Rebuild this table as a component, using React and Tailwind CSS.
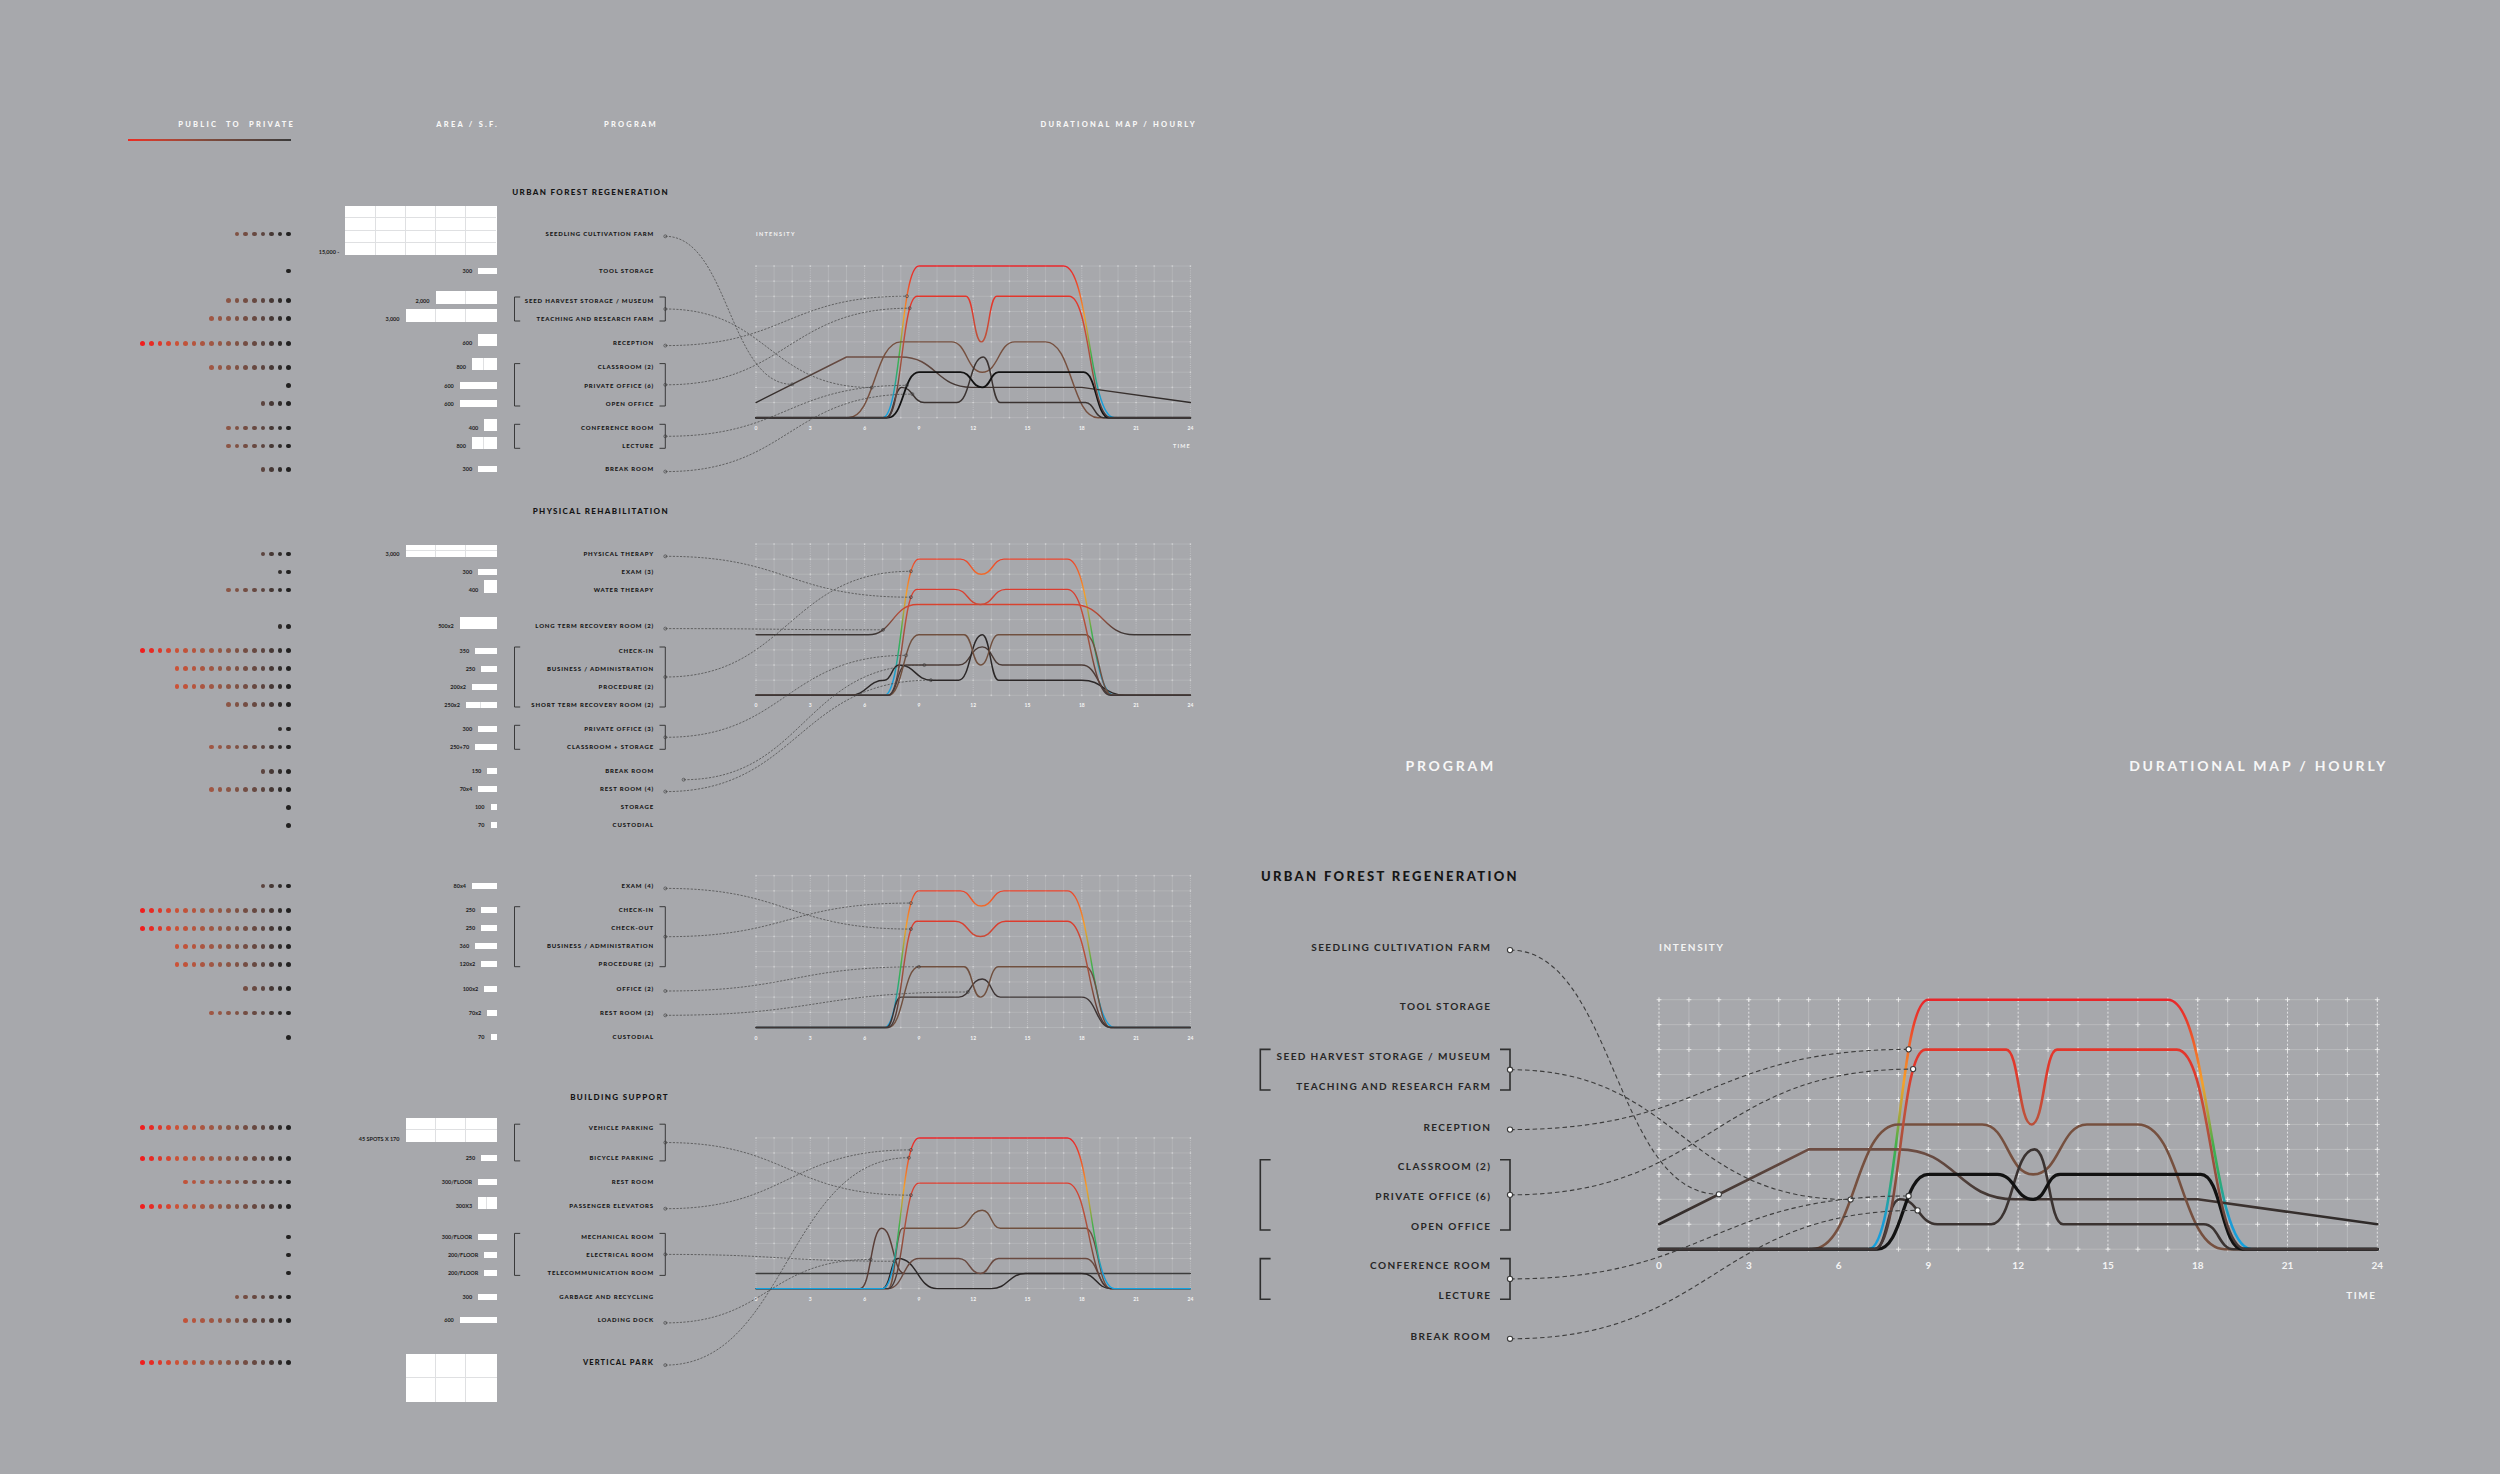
const FONT = "font-['Lato','Noto_Sans','DejaVu_Sans',sans-serif]";

// colour of a dot by its index counted from the right end
const DOT_STOPS = [
  [0, [34, 33, 33]],
  [1, [48, 44, 43]],
  [3, [92, 68, 63]],
  [7, [140, 86, 70]],
  [9, [160, 87, 68]],
  [13, [204, 82, 55]],
  [17, [240, 30, 30]],
];

function dotColor(i) {
  for (let k = 1; k < DOT_STOPS.length; k++) {
    const [i0, c0] = DOT_STOPS[k - 1];
    const [i1, c1] = DOT_STOPS[k];
    if (i <= i1) {
      const f = (i - i0) / (i1 - i0);
      const c = c0.map((v, j) => Math.round(v + (c1[j] - v) * f));
      return `rgb(${c[0]},${c[1]},${c[2]})`;
    }
  }
  return "rgb(240,30,30)";
}

// smooth step curves: each segment leaves and enters with a flat tangent
function curvePath(pts, X, Y) {
  let d = `M${X(pts[0][0])},${Y(pts[0][1])}`;
  for (let i = 1; i < pts.length; i++) {
    const [h0, v0] = pts[i - 1];
    const [h1, v1, m] = pts[i];
    const x0 = X(h0), y0 = Y(v0), x1 = X(h1), y1 = Y(v1);
    if (m === "L" || v0 === v1) d += ` L${x1},${y1}`;
    else {
      const mx = (x0 + x1) / 2;
      d += ` C${mx},${y0} ${mx},${y1} ${x1},${y1}`;
    }
  }
  return d;
}

function valueAt(pts, h) {
  for (let i = 1; i < pts.length; i++) {
    const [h0, v0] = pts[i - 1];
    const [h1, v1, m] = pts[i];
    if (h <= h1) {
      if (m === "L" || v0 === v1) return v0 + ((v1 - v0) * (h - h0)) / (h1 - h0);
      const f = (h - h0) / (h1 - h0);
      let lo = 0, hi = 1;
      for (let k = 0; k < 40; k++) {
        const t = (lo + hi) / 2;
        const x = 1.5 * t * (1 - t) + t * t * t;
        if (x < f) lo = t;
        else hi = t;
      }
      const t = (lo + hi) / 2;
      return v0 + (v1 - v0) * (3 * t * t - 2 * t * t * t);
    }
  }
  return pts[pts.length - 1][1];
}

function chartMap(g) {
  const rh = (g.zero - g.top) / 10;
  return { X: (h) => g.x0 + h * g.cw, Y: (v) => g.zero - v * rh, rh };
}

const CH1 = {
  order: ["A", "D", "C", "F", "E", "B"],
  A: { pts: [[0, 0], [7, 0], [9, 10], [17, 10], [19.8, 0], [24, 0]], stroke: "A" },
  B: { pts: [[0, 0], [7.2, 0], [8.9, 8], [11.6, 8], [12.45, 5], [13.3, 8], [17.3, 8], [19.6, 0], [24, 0]], stroke: "B" },
  C: { pts: [[0, 0], [5.1, 0], [8, 5], [10.8, 5], [12.5, 3], [14.3, 5], [16, 5], [18.9, 0], [24, 0]], stroke: "#76503f" },
  D: { pts: [[0, 1], [5, 4, "L"], [8, 4], [11.9, 2], [18, 2], [24, 1, "L"]], stroke: "D" },
  E: { pts: [[0, 0], [7.3, 0], [9, 3], [11.3, 3], [12.5, 2], [13.4, 3], [18.1, 3], [19.5, 0], [24, 0]], stroke: "#121212", w: 1.25 },
  F: { pts: [[0, 0], [7.2, 0], [8.05, 2], [9.3, 1], [11.1, 1], [12.55, 4], [13.5, 1], [18.2, 1], [19.2, 0], [24, 0]], stroke: "#3b3331" },
};

const A9 = [[0, 0], [7.1, 0], [9, 9], [11.3, 9], [12.45, 8], [13.7, 9], [17.2, 9], [19.8, 0], [24, 0]];
const B7 = [[0, 0], [7.3, 0], [8.9, 7], [11, 7], [12.4, 6], [13.8, 7], [17.2, 7], [19.6, 0], [24, 0]];

const CH2 = {
  order: ["A", "C", "F", "E", "D", "B"],
  A: { pts: A9, stroke: "A" },
  B: { pts: B7, stroke: "B" },
  C: { pts: [[0, 4], [6.2, 4], [8.9, 6], [17.5, 6], [20.9, 4], [24, 4]], stroke: "C" },
  D: { pts: [[0, 0], [7.3, 0], [9, 4], [11.5, 4], [12.4, 2], [13.4, 4], [18.2, 4], [19.7, 0], [24, 0]], stroke: "#70503f" },
  E: { pts: [[0, 0], [5.2, 0], [7.1, 1], [7.9, 2], [9.7, 1], [11.2, 1], [12.5, 4], [13.4, 1], [18, 1], [20.4, 0], [24, 0]], stroke: "#2b2727" },
  F: { pts: [[0, 0], [7.3, 0], [8.3, 2], [11.2, 2], [12.5, 3.2], [13.6, 2], [18, 2], [19.8, 0], [24, 0]], stroke: "#4b3b36" },
};

const CH3 = {
  order: ["A", "D", "C", "B"],
  A: { pts: A9, stroke: "A" },
  B: { pts: B7, stroke: "B" },
  C: { pts: [[0, 0], [7.3, 0], [9, 4], [11.5, 4], [12.4, 2], [13.4, 4], [18.2, 4], [19.6, 0], [24, 0]], stroke: "#70503f" },
  D: { pts: [[0, 0], [7.2, 0], [8, 2], [11.2, 2], [12.5, 3.2], [13.5, 2], [18, 2], [19.6, 0], [24, 0]], stroke: "#3d3434" },
};

const CH4 = {
  order: ["E", "G", "F", "D", "C", "B", "A"],
  A: { pts: [[0, 0], [7, 0], [9, 10], [17.2, 10], [19.8, 0], [24, 0]], stroke: "A" },
  B: { pts: [[0, 0], [7.3, 0], [9, 7], [17.2, 7], [19.6, 0], [24, 0]], stroke: "B" },
  C: { pts: [[0, 0], [7.3, 0], [8.1, 4], [11.1, 4], [12.5, 5.2], [13.5, 4], [18.2, 4], [19.6, 0], [24, 0]], stroke: "#70503f" },
  D: { pts: [[0, 0], [7.3, 0], [9, 2], [11.2, 2], [12.4, 1], [13.4, 2], [18.2, 2], [19.6, 0], [24, 0]], stroke: "#6a4a40" },
  E: { pts: [[0, 1], [24, 1]], stroke: "#3c3c3c" },
  F: { pts: [[0, 0], [5.75, 0], [6.95, 4], [8.2, 1]], stroke: "#5a3e37" },
  G: { pts: [[0, 0], [7, 0], [7.85, 2], [10, 0], [13, 0], [14.9, 1], [18, 1], [19.6, 0], [24, 0]], stroke: "#2a2626" },
};

const SECTIONS = [
  {
    id: "s1",
    top: 209,
    chart: { x0: 756, cw: 18.1, top: 266, zero: 417.7, labels: true },
    curves: CH1,
    brackets: [[2, 3], [5, 7], [8, 9]],
    links: [
      { row: 0, c: "D", h: 2.0 },
      { br: 0, c: "C", h: 6.4 },
      { row: 4, c: "A", h: 8.34 },
      { br: 1, c: "B", h: 8.49 },
      { br: 2, c: "E", h: 8.34 },
      { row: 10, c: "F", h: 8.64 },
    ],
    rows: [
      { dots: 7, num: "15,000 -", bw: 151.2, bh: 48.3, cols: 5, rows: 4, label: "SEEDLING CULTIVATION FARM", rowH: 50, align: "end" },
      { dots: 1, num: "300", bw: 18.4, bh: 6.3, label: "TOOL STORAGE", gap: 3 },
      { dots: 8, num: "2,000", bw: 61, bh: 12.3, cols: 2, label: "SEED HARVEST STORAGE / MUSEUM", gap: 11.7 },
      { dots: 10, num: "3,000", bw: 91, bh: 12.3, cols: 3, label: "TEACHING AND RESEARCH FARM" },
      { dots: 18, num: "600", bw: 18.4, bh: 12.3, label: "RECEPTION", gap: 6.6 },
      { dots: 10, num: "800", bw: 24.5, bh: 12.3, cols: 2, label: "CLASSROOM (2)", gap: 6 },
      { dots: 1, num: "600", bw: 36.7, bh: 6.3, label: "PRIVATE OFFICE (6)", gap: 0.4 },
      { dots: 4, num: "600", bw: 36.7, bh: 6.3, label: "OPEN OFFICE" },
      { dots: 8, num: "400", bw: 12.2, bh: 12.3, label: "CONFERENCE ROOM", gap: 6.3 },
      { dots: 8, num: "800", bw: 24.5, bh: 12.3, cols: 2, label: "LECTURE" },
      { dots: 4, num: "300", bw: 18.4, bh: 6.3, label: "BREAK ROOM", gap: 5.3 },
    ],
  },
  {
    id: "s2",
    top: 545,
    chart: { x0: 756, cw: 18.1, top: 544, zero: 695.3 },
    curves: CH2,
    brackets: [[4, 7], [8, 9]],
    links: [
      { row: 0, c: "B", h: 8.56 },
      { row: 3, c: "C", h: 7.02 },
      { br: 0, c: "A", h: 8.56 },
      { br: 1, c: "D", h: 8.29 },
      { row: 10, c: "F", h: 9.3, sx: 683.6, dy: 8.4 },
      { row: 11, c: "E", h: 9.66 },
    ],
    rows: [
      { dots: 4, num: "3,000", bw: 91, bh: 12.3, cols: 3, rows: 2, label: "PHYSICAL THERAPY" },
      { dots: 2, num: "300", bw: 18.4, bh: 6, label: "EXAM (3)" },
      { dots: 8, num: "400", bw: 12.2, bh: 12.7, label: "WATER THERAPY" },
      { dots: 2, num: "500x2", bw: 36.7, bh: 12.3, label: "LONG TERM RECOVERY ROOM (2)", gap: 18.3 },
      { dots: 18, num: "350", bw: 21.4, bh: 6, label: "CHECK-IN", gap: 6.4 },
      { dots: 14, num: "250", bw: 15.3, bh: 6, label: "BUSINESS / ADMINISTRATION" },
      { dots: 14, num: "200x2", bw: 24.5, bh: 6, label: "PROCEDURE (2)" },
      { dots: 8, num: "250x2", bw: 30.6, bh: 6, cols: 2, label: "SHORT TERM RECOVERY ROOM (2)" },
      { dots: 2, num: "300", bw: 18.4, bh: 6, label: "PRIVATE OFFICE (3)", gap: 6.3 },
      { dots: 10, num: "250+70", bw: 21.4, bh: 6, label: "CLASSROOM + STORAGE" },
      { dots: 4, num: "150", bw: 9.2, bh: 6, label: "BREAK ROOM", gap: 6.3 },
      { dots: 10, num: "70x4", bw: 18.4, bh: 6, label: "REST ROOM (4)" },
      { dots: 1, num: "100", bw: 6, bh: 6.3, label: "STORAGE" },
      { dots: 1, num: "70", bw: 6, bh: 6.3, label: "CUSTODIAL" },
    ],
  },
  {
    id: "s3",
    top: 877.1,
    chart: { x0: 756, cw: 18.1, top: 875.7, zero: 1027.5 },
    curves: CH3,
    brackets: [[1, 4]],
    links: [
      { row: 0, c: "B", h: 8.56 },
      { br: 0, c: "A", h: 8.56 },
      { row: 5, c: "C", h: 9.0 },
      { row: 6, c: "D", h: 11.7 },
    ],
    rows: [
      { dots: 4, num: "80x4", bw: 24.5, bh: 6, label: "EXAM (4)" },
      { dots: 18, num: "250", bw: 15.3, bh: 6, label: "CHECK-IN", gap: 6.3 },
      { dots: 18, num: "250", bw: 15.3, bh: 6, label: "CHECK-OUT" },
      { dots: 14, num: "360", bw: 21.4, bh: 6, label: "BUSINESS / ADMINISTRATION" },
      { dots: 14, num: "120x2", bw: 15.3, bh: 6, label: "PROCEDURE (2)" },
      { dots: 6, num: "100x2", bw: 12.2, bh: 6, label: "OFFICE (2)", gap: 6.3 },
      { dots: 10, num: "70x2", bw: 9.2, bh: 6, label: "REST ROOM (2)", gap: 6.3 },
      { dots: 1, num: "70", bw: 6, bh: 6.3, label: "CUSTODIAL", gap: 6.3 },
    ],
  },
  {
    id: "s4",
    top: 1118.9,
    chart: { x0: 756, cw: 18.1, top: 1137.9, zero: 1288.6 },
    curves: CH4,
    brackets: [[0, 1], [4, 6]],
    links: [
      { br: 0, c: "B", h: 8.56 },
      { row: 3, c: "A", h: 8.56 },
      { br: 1, c: "G", h: 7.65 },
      { row: 8, c: "F", h: 6.34 },
      { row: 9, c: "A", h: 8.45 },
    ],
    rows: [
      { dots: 18, num: "45 SPOTS X 170", bw: 91, bh: 24.2, cols: 3, rows: 2, label: "VEHICLE PARKING", align: "start" },
      { dots: 18, num: "250", bw: 15.3, bh: 6, label: "BICYCLE PARKING", gap: 12.7 },
      { dots: 13, num: "300/FLOOR", bw: 18.4, bh: 6, label: "REST ROOM", gap: 5.5 },
      { dots: 18, num: "300X3", bw: 18.4, bh: 12.2, cols: 2, label: "PASSENGER ELEVATORS", gap: 6.3 },
      { dots: 1, num: "300/FLOOR", bw: 18.4, bh: 6, label: "MECHANICAL ROOM", gap: 12.7 },
      { dots: 1, num: "200/FLOOR", bw: 12.2, bh: 6, label: "ELECTRICAL ROOM" },
      { dots: 1, num: "200/FLOOR", bw: 12.2, bh: 6, label: "TELECOMMUNICATION ROOM" },
      { dots: 7, num: "300", bw: 18.4, bh: 6, label: "GARBAGE AND RECYCLING", gap: 5.9 },
      { dots: 13, num: "600", bw: 36.7, bh: 6, label: "LOADING DOCK", gap: 5.6 },
      { dots: 18, num: "", bw: 91, bh: 48.2, cols: 3, rows: 2, label: "VERTICAL PARK", gap: 24.2, align: "top", big: true },
    ],
  },
];

const RIGHT = {
  top: 932.25,
  rowH: 29.7,
  chart: { x0: 1659, cw: 29.93, top: 999.7, zero: 1249.2, big: true },
  rows: [
    { label: "SEEDLING CULTIVATION FARM" },
    { label: "TOOL STORAGE", gap: 29.6 },
    { label: "SEED HARVEST STORAGE / MUSEUM", gap: 20.1 },
    { label: "TEACHING AND RESEARCH FARM" },
    { label: "RECEPTION", gap: 11 },
    { label: "CLASSROOM (2)", gap: 10.2 },
    { label: "PRIVATE OFFICE (6)" },
    { label: "OPEN OFFICE" },
    { label: "CONFERENCE ROOM", gap: 9.8 },
    { label: "LECTURE" },
    { label: "BREAK ROOM", gap: 11 },
  ],
};

function rowCenters(top, rows, defH = 18) {
  let y = top;
  return rows.map((r, i) => {
    if (i > 0) y += r.gap || 0;
    const h = r.rowH || defH;
    const c = y + h / 2;
    y += h;
    return c;
  });
}

function Dots({ n }) {
  return (
    <div className="w-[171px] shrink-0 flex justify-end gap-[4px]">
      {Array.from({ length: n }).map((_, k) => (
        <span
          key={k}
          className="w-[4.6px] h-[4.6px] rounded-full"
          style={{ backgroundColor: dotColor(n - 1 - k) }}
        />
      ))}
    </div>
  );
}

function Bar({ w, h, cols = 1, rows = 1 }) {
  return (
    <div
      className="bg-white shrink-0 grid"
      style={{
        width: w,
        height: h,
        gridTemplateColumns: `repeat(${cols},1fr)`,
        gridTemplateRows: `repeat(${rows},1fr)`,
      }}
    >
      {Array.from({ length: cols * rows }).map((_, k) => (
        <div
          key={k}
          className={`border-[#dfe0e2] ${k % cols !== cols - 1 ? "border-r" : ""} ${
            Math.floor(k / cols) !== rows - 1 ? "border-b" : ""
          }`}
        />
      ))}
    </div>
  );
}

function LeftRow({ r }) {
  const areaAlign =
    r.align === "end"
      ? "self-end mb-[4.3px]"
      : r.align === "start"
      ? "self-start -mt-[1px]"
      : r.align === "top"
      ? "self-start"
      : "self-center h-[6px]";
  return (
    <div className="flex items-center" style={{ marginTop: r.gap || 0, height: r.rowH || 18 }}>
      <Dots n={r.dots} />
      <div className={`w-[205.5px] shrink-0 flex justify-end items-end gap-[6px] ${areaAlign}`}>
        {r.num && (
          <span className="text-[5.5px] leading-[6px] font-bold text-[#1e1e1e] whitespace-nowrap">
            {r.num}
          </span>
        )}
        <Bar w={r.bw} h={r.bh} cols={r.cols} rows={r.rows} />
      </div>
      <div
        className={`w-[157.5px] shrink-0 text-right whitespace-nowrap font-black text-[#161616] ${
          r.big ? "text-[7.5px] leading-[8px] tracking-[0.15em]" : "text-[6px] leading-[6px] tracking-[0.14em]"
        }`}
      >
        {r.label}
      </div>
    </div>
  );
}

function SectionTitle({ className, children }) {
  return (
    <div
      className={`w-[549px] h-[10px] text-right text-[8px] leading-[10px] font-black tracking-[0.17em] text-[#141414] whitespace-nowrap ${className}`}
    >
      {children}
    </div>
  );
}

function LeftPanel() {
  const [s1, s2, s3, s4] = SECTIONS;
  return (
    <div className="w-[1250px] shrink-0 pl-[120px] flex flex-col">
      <div className="mt-[120px] flex h-[10px] text-[7.5px] leading-[10px] font-black tracking-[0.3em] text-[#f7f7f7] whitespace-nowrap">
        <div className="w-[175px] text-right">PUBLIC&nbsp; TO&nbsp; PRIVATE</div>
        <div className="w-[204px] text-right">AREA / S.F.</div>
        <div className="w-[159px] text-right">PROGRAM</div>
        <div className="w-[539px] text-right">DURATIONAL MAP / HOURLY</div>
      </div>
      <div className="mt-[9.3px] ml-[8px] w-[163px] h-[1.5px] bg-linear-to-r from-[#ee2a22] via-[#7d4a3c] to-[#3b3b3b]" />

      <SectionTitle className="mt-[46.2px]">URBAN FOREST REGENERATION</SectionTitle>
      <div className="mt-[12px] flex flex-col">
        {s1.rows.map((r, i) => (
          <LeftRow key={i} r={r} />
        ))}
      </div>

      <SectionTitle className="mt-[28px]">PHYSICAL REHABILITATION</SectionTitle>
      <div className="mt-[28.7px] flex flex-col">
        {s2.rows.map((r, i) => (
          <LeftRow key={i} r={r} />
        ))}
      </div>

      <div className="mt-[42.8px] flex flex-col">
        {s3.rows.map((r, i) => (
          <LeftRow key={i} r={r} />
        ))}
      </div>

      <SectionTitle className="mt-[46.2px]">BUILDING SUPPORT</SectionTitle>
      <div className="mt-[16.4px] flex flex-col">
        {s4.rows.map((r, i) => (
          <LeftRow key={i} r={r} />
        ))}
      </div>
    </div>
  );
}

function RightPanel() {
  return (
    <div className="w-[1250px] shrink-0 pl-[10px] flex flex-col">
      <div className="mt-[758px] flex h-[16px] text-[14px] leading-[16px] font-bold tracking-[0.2em] text-[#f7f7f7] whitespace-nowrap">
        <div className="w-[236px] text-right">PROGRAM</div>
        <div className="w-[892px] text-right">DURATIONAL MAP / HOURLY</div>
      </div>
      <div className="mt-[93.5px] h-[16px] pl-[1px] text-[13px] leading-[16px] font-black tracking-[0.18em] text-[#161616] whitespace-nowrap">
        URBAN FOREST REGENERATION
      </div>
      <div className="mt-[48.75px] flex flex-col">
        {RIGHT.rows.map((r, i) => (
          <div key={i} className="flex items-center h-[29.7px]" style={{ marginTop: r.gap || 0 }}>
            <div className="w-[231.4px] text-right text-[10px] leading-[12px] font-bold tracking-[0.14em] text-[#262626] whitespace-nowrap">
              {r.label}
            </div>
          </div>
        ))}
      </div>
    </div>
  );
}

function Chart({ id, g, curves }) {
  const { X, Y, rh } = chartMap(g);
  const big = !!g.big;
  const pl = big ? 2.4 : 1;
  let hLines = "";
  let vLines = "";
  let vDots = "";
  let cross = "";
  for (let r = 0; r <= 10; r++) {
    const y = g.top + r * rh;
    hLines += `M${X(0)},${y}H${X(24)}`;
  }
  for (let c = 0; c <= 24; c++) {
    const x = X(c);
    if (c % 3 === 0) vDots += `M${x},${g.top}V${g.zero}`;
    else vLines += `M${x},${g.top}V${g.zero}`;
    for (let r = 0; r <= 10; r++) {
      const y = g.top + r * rh;
      cross += `M${x - pl},${y}H${x + pl}M${x},${y - pl}V${y + pl}`;
    }
  }
  const sw = big ? 2.6 : 1.45;
  const strokeOf = (s) =>
    s === "A" || s === "B" || s === "C" || s === "D" ? `url(#${id}-${s})` : s;
  const fs = big ? 10 : 5;
  return (
    <g>
      <defs>
        <linearGradient id={`${id}-A`} gradientUnits="userSpaceOnUse" x1="0" y1={g.zero} x2="0" y2={g.top}>
          <stop offset="0" stopColor="#12a2e0" />
          <stop offset="0.12" stopColor="#1b9bd4" />
          <stop offset="0.3" stopColor="#2eae66" />
          <stop offset="0.42" stopColor="#45b04a" />
          <stop offset="0.56" stopColor="#b8a43a" />
          <stop offset="0.67" stopColor="#f6a02a" />
          <stop offset="0.8" stopColor="#f06b2b" />
          <stop offset="0.92" stopColor="#ea3b2b" />
          <stop offset="1" stopColor="#e8262a" />
        </linearGradient>
        <linearGradient id={`${id}-B`} gradientUnits="userSpaceOnUse" x1="0" y1={g.zero} x2="0" y2={g.top}>
          <stop offset="0" stopColor="#3e3636" />
          <stop offset="0.3" stopColor="#94503e" />
          <stop offset="0.55" stopColor="#c2503a" />
          <stop offset="0.72" stopColor="#e1392c" />
          <stop offset="1" stopColor="#e8302a" />
        </linearGradient>
        <linearGradient id={`${id}-C`} gradientUnits="userSpaceOnUse" x1="0" y1={g.zero} x2="0" y2={g.top}>
          <stop offset="0" stopColor="#333" />
          <stop offset="0.41" stopColor="#3d3634" />
          <stop offset="0.5" stopColor="#93503f" />
          <stop offset="0.6" stopColor="#d8432f" />
          <stop offset="1" stopColor="#d8432f" />
        </linearGradient>
        <linearGradient id={`${id}-D`} gradientUnits="userSpaceOnUse" x1="0" y1={g.zero} x2="0" y2={g.top}>
          <stop offset="0" stopColor="#2a2828" />
          <stop offset="0.12" stopColor="#302b2a" />
          <stop offset="0.26" stopColor="#4c3d38" />
          <stop offset="0.4" stopColor="#6d4d43" />
          <stop offset="1" stopColor="#6d4d43" />
        </linearGradient>
      </defs>
      <path d={hLines} stroke="#b8b9bc" strokeWidth={big ? 1 : 0.7} fill="none" />
      <path d={vLines} stroke="#b8b9bc" strokeWidth={big ? 1 : 0.7} fill="none" />
      <path
        d={vDots}
        stroke="#e9e9ea"
        strokeWidth={big ? 1 : 0.6}
        strokeDasharray={big ? "2 2" : "1 1.2"}
        strokeOpacity={big ? 0.9 : 0.6}
        fill="none"
      />
      <path d={cross} stroke="#f0f0f0" strokeWidth={big ? 1 : 0.5} strokeOpacity={big ? 0.85 : 0.6} fill="none" />
      {curves.order.map((k) => {
        const c = curves[k];
        return (
          <path
            key={k}
            d={curvePath(c.pts, X, Y)}
            stroke={strokeOf(c.stroke)}
            strokeWidth={sw * (c.w || 1)}
            fill="none"
            strokeLinecap="round"
            strokeLinejoin="round"
          />
        );
      })}
      {[0, 3, 6, 9, 12, 15, 18, 21, 24].map((h) => (
        <text
          key={h}
          x={X(h)}
          y={g.zero + (big ? 20.2 : 12.1)}
          textAnchor="middle"
          fontSize={fs}
          fontWeight="700"
          fill="#f4f4f4"
        >
          {h}
        </text>
      ))}
      {g.labels && (
        <>
          <text x={X(0)} y={g.top - (big ? 49 : 30)} fontSize={big ? 10 : 5.5} fontWeight="700" fill="#f4f4f4" letterSpacing={big ? 1.6 : 1.3}>
            INTENSITY
          </text>
          <text x={X(24) - (big ? 31 : 17.5)} y={g.zero + (big ? 50 : 30)} fontSize={big ? 10 : 5.5} fontWeight="700" fill="#f4f4f4" letterSpacing={big ? 1.5 : 1.2}>
            TIME
          </text>
        </>
      )}
    </g>
  );
}

function Links({ centers, brackets, links, g, curves, big }) {
  const { X, Y } = chartMap(g);
  const bx = big ? { l: 1260.3, lw: 10.3, r: 1510, rw: 10 } : { l: 514.5, lw: 5.7, r: 665.3, rw: 5.8 };
  const bUp = big ? 6.8 : 3.7;
  const bDn = big ? 4.1 : 2.3;
  const rowDy = big ? 3 : 2.3;
  const br = brackets.map(([a, b]) => [centers[a] - bUp, centers[b] + bDn]);
  const dash = big ? "4.5 3" : "2.2 1.4";
  const lw = big ? 1.1 : 0.75;
  const rad = big ? 2.6 : 1.5;
  return (
    <g>
      {br.map(([y1, y2], i) => (
        <g key={i} stroke="#2e2e2e" strokeWidth={big ? 1.6 : 0.9} fill="none">
          <path d={`M${bx.l + bx.lw},${y1}H${bx.l}V${y2}H${bx.l + bx.lw}`} />
          <path d={`M${bx.r - bx.rw},${y1}H${bx.r}V${y2}H${bx.r - bx.rw}`} />
        </g>
      ))}
      {links.map((l, i) => {
        const sx = l.sx || bx.r;
        const sy = l.br !== undefined ? (br[l.br][0] + br[l.br][1]) / 2 : centers[l.row] + (l.dy || rowDy);
        const ex = X(l.h);
        const ey = Y(valueAt(curves[l.c].pts, l.h));
        const mx = (sx + ex) / 2;
        return (
          <g key={i}>
            <path
              d={`M${sx},${sy} C${mx},${sy} ${mx},${ey} ${ex},${ey}`}
              stroke={big ? "#3d3d3d" : "#4a4a4a"}
              strokeWidth={lw}
              strokeDasharray={dash}
              fill="none"
            />
            <circle cx={sx} cy={sy} r={rad} fill={big ? "#ffffff" : "none"} stroke="#3a3a3a" strokeWidth={big ? 1.1 : 0.6} />
            <circle cx={ex} cy={ey} r={rad} fill={big ? "#ffffff" : "none"} stroke="#3a3a3a" strokeWidth={big ? 1.1 : 0.6} />
          </g>
        );
      })}
    </g>
  );
}

function Overlay() {
  const s1 = SECTIONS[0];
  const rightCenters = rowCenters(RIGHT.top, RIGHT.rows, RIGHT.rowH);
  return (
    <svg
      className="absolute left-0 top-0 pointer-events-none"
      width="2500"
      height="1474"
      viewBox="0 0 2500 1474"
      style={{ fontFamily: "Lato, 'Noto Sans', sans-serif" }}
    >
      {SECTIONS.map((s) => (
        <g key={s.id}>
          <Chart id={s.id} g={s.chart} curves={s.curves} />
          <Links
            centers={rowCenters(s.top, s.rows)}
            brackets={s.brackets}
            links={s.links}
            g={s.chart}
            curves={s.curves}
          />
        </g>
      ))}
      <Chart id="rt" g={{ ...RIGHT.chart, labels: true }} curves={CH1} />
      <Links
        centers={rightCenters}
        brackets={s1.brackets}
        links={s1.links.map((l) => ({ ...l, sx: undefined, dy: undefined }))}
        g={RIGHT.chart}
        curves={CH1}
        big
      />
    </svg>
  );
}

export default function App() {
  return (
    <div className={`relative w-[2500px] h-[1474px] overflow-hidden bg-[#a7a8ac] ${FONT}`}>
      <div className="flex">
        <LeftPanel />
        <RightPanel />
      </div>
      <Overlay />
    </div>
  );
}
